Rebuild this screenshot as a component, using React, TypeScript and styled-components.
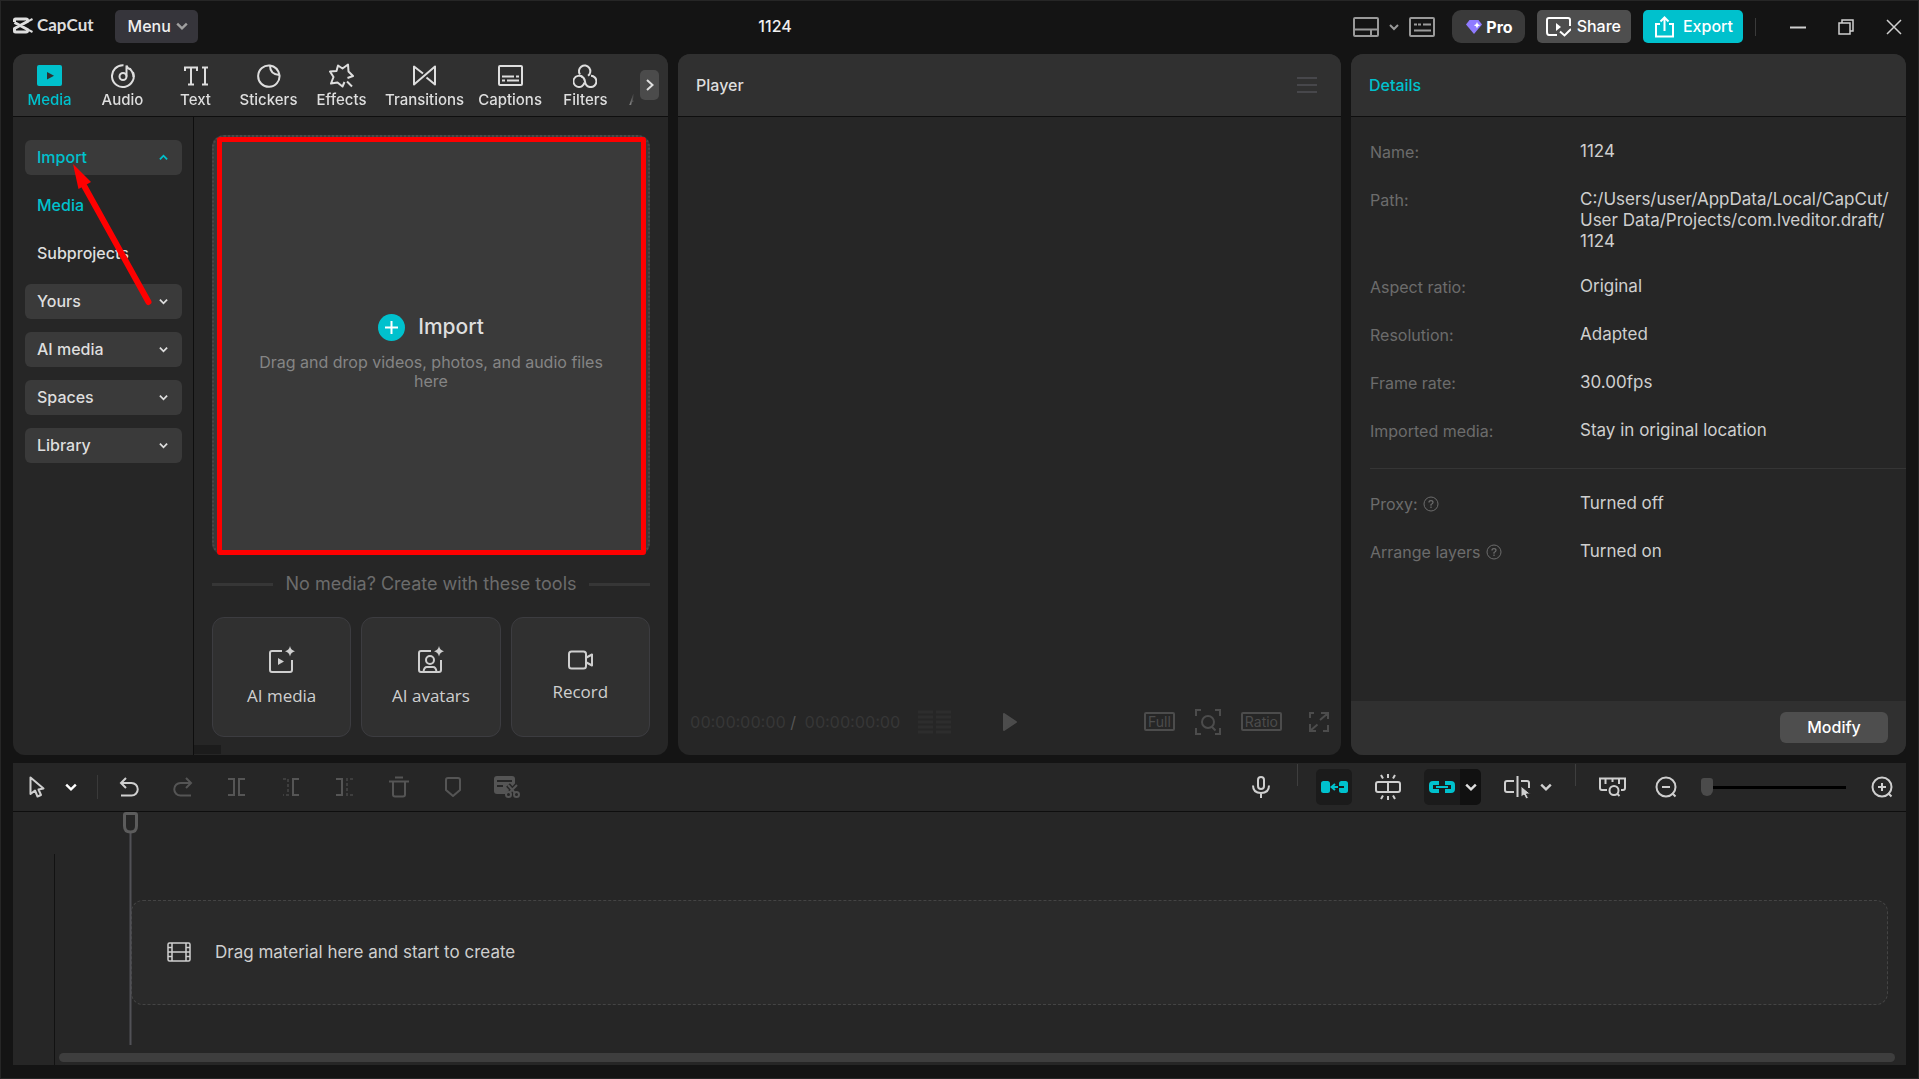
import React from "react";
import styled, { createGlobalStyle } from "styled-components";

const accent = "#00c1cd";
const line = "#0e0e0e";

const GlobalStyle = createGlobalStyle`
  * { box-sizing: border-box; }
  body { margin: 0; background: #141414; }
  body, button, input { font-family: Inter, "Liberation Sans", sans-serif; }
  button { margin: 0; padding: 0; border: 0; background: none; color: inherit; font-size: 16px; cursor: pointer; }
  svg { display: block; flex: none; }
`;

/* ---------- icons ---------- */

type IconProps = { w: number; h: number; color?: string; sw?: number; children: React.ReactNode };

const Icon = ({ w, h, color = "currentColor", sw = 2, children }: IconProps) => (
  <svg width={w} height={h} viewBox={`0 0 ${w} ${h}`} fill="none" stroke={color} strokeWidth={sw} aria-hidden="true">
    {children}
  </svg>
);

const Chevron = ({ up = false, size = 10 }: { up?: boolean; size?: number }) => (
  <svg width={size} height={size} viewBox="0 0 10 10" fill="none" stroke="currentColor" strokeWidth="2" aria-hidden="true">
    <path d={up ? "M1 7l4-4 4 4" : "M1 3l4 4 4-4"} />
  </svg>
);

const Logo = () => (
  <Icon w={20} h={17} color="#dedede" sw={3}>
    <path d="M1.500 5V3Q1.500 2 2.500 2H13Q14.500 2 14.500 3.200V4.500L1.500 11.500V14Q1.500 15 2.500 15H13Q14.500 15 14.500 13.800V12.500L1.500 5.500" strokeLinejoin="round" />
    <path d="M13.500 5.200L19.500 2M13.500 11.800L19.500 15" strokeWidth="2" />
  </Icon>
);

const MediaIcon = () => (
  <Icon w={25} h={21}>
    <rect x="0" y="0" width="25" height="21" rx="2" fill={accent} stroke="none" />
    <path d="M10 7v7.500l7-3.750z" fill="#303030" stroke="none" />
  </Icon>
);
const AudioIcon = () => (
  <Icon w={24} h={24}>
    <path d="M12.500 1.200A10.900 10.900 0 1 0 22 8" />
    <path d="M18.500 4.500Q22 7.500 22.500 13" />
    <circle cx="12" cy="12.500" r="3.500" />
    <path d="M15.500 12.500V1.500Q16 4.500 20 5.500" />
  </Icon>
);
const TextIcon = () => (
  <Icon w={24} h={20} sw={2}>
    <path d="M1 5V1.500h12V5M7 1.500v17M4 18.500h6M18 1.500h6M21 1.500v17M18 18.500h6" />
  </Icon>
);
const StickerIcon = () => (
  <Icon w={24} h={24}>
    <path d="M13 1.500A10.700 10.700 0 1 0 22.500 11" />
    <path d="M13 1.500Q13 10.500 22.500 11" />
    <path d="M13 1.500Q20.500 2.500 22.500 11" />
  </Icon>
);
const EffectsIcon = () => (
  <Icon w={25} h={25}>
    <path d="M15.500 19L13.500 23.500L8.500 19.500L2 20.500L4.500 14L1 8.500L7.500 8L9 2.500L13.500 5.500L19 1.500L19.500 8.500L24 13L18.500 15" strokeLinejoin="round" />
    <path d="M18 18.500l5 5" />
  </Icon>
);
const TransitionsIcon = () => (
  <Icon w={23} h={21}>
    <path d="M10 8.500L1 1.500V19.500L22 1.500V19.500L13.500 12.500" strokeLinejoin="round" />
  </Icon>
);
const CaptionsIcon = () => (
  <Icon w={25} h={21}>
    <rect x="1" y="1" width="23" height="19" rx="1" />
    <path d="M4 11.500h12M18 11.500h3M4 15.500h3M9 15.500h12" />
  </Icon>
);
const FiltersIcon = () => (
  <Icon w={24} h={24}>
    <path d="M7 10.500A5.700 5.700 0 1 1 15 11.800" />
    <path d="M9.500 13A5.600 5.600 0 1 0 11.500 18.500" />
    <path d="M18 11.700A5.700 5.700 0 1 1 12 17.500Q11.500 13.500 8 11.800" />
  </Icon>
);

const sparkle = "M22 0q.9 4.300 5 5.200-4.100.9-5 5.200-.9-4.300-5-5.200 4.100-.9 5-5.200z";
const AiMediaIcon = () => (
  <Icon w={27} h={28} color="#cfcfcf" sw={2}>
    <path d="M14 5H4Q2 5 2 7V24Q2 26 4 26H22Q24 26 24 24V14" />
    <path d="M10 12v7l6-3.500z" fill="#cfcfcf" stroke="none" />
    <path d={sparkle} fill="#cfcfcf" stroke="none" />
  </Icon>
);
const AiAvatarIcon = () => (
  <Icon w={27} h={28} color="#cfcfcf" sw={2}>
    <path d="M14 5H4Q2 5 2 7V24Q2 26 4 26H22Q24 26 24 24V14" />
    <circle cx="13" cy="14" r="4" />
    <path d="M6.500 26Q7 21 10 21h6q3 0 3.500 5" />
    <path d={sparkle} fill="#cfcfcf" stroke="none" />
  </Icon>
);
const RecordIcon = () => (
  <Icon w={25} h={20} color="#cfcfcf">
    <rect x="1" y="1.500" width="17" height="17" rx="2.500" />
    <path d="M18.500 7.500L24 4.500V15.500L18.500 12.500" strokeLinejoin="round" />
  </Icon>
);
const HelpIcon = () => (
  <svg width="16" height="16" viewBox="0 0 16 16" fill="none" stroke="#6c6c6c" aria-hidden="true">
    <circle cx="8" cy="8" r="7" />
    <path d="M6 6.500Q6 4.700 8 4.700T10 6.400Q10 7.300 8 8.500V9.700M8 10.600v1.300" strokeWidth="1.200" />
  </svg>
);

/* ---------- window frame and title bar ---------- */

const Window = styled.div`
  min-height: 100vh;
  display: flex;
  flex-direction: column;
  padding: 0 12px 13px;
  border: 1px solid #262626;
  background: #141414;
  color: #dedede;
  font-size: 16px;
`;

const TitleBar = styled.header`
  height: 53px;
  display: flex;
  align-items: center;
  justify-content: space-between;
  padding-bottom: 2px;
`;

const Group = styled.div<{ gap?: number }>`
  display: flex;
  align-items: center;
  gap: ${(p) => p.gap ?? 0}px;
`;

const WindowControls = styled(Group)`
  padding-left: 18px;
`;

const Brand = styled.div`
  display: flex;
  align-items: center;
  gap: 4px;
  margin-right: 21px;
  padding-bottom: 3px;
  font: 700 17px/20px Lato, sans-serif;
`;

const MenuButton = styled.button`
  display: flex;
  align-items: center;
  gap: 5px;
  height: 33px;
  padding: 0 10px 2px 13px;
  border-radius: 5px;
  background: #36353b;
  color: #efefef;
  font-weight: 500;
  svg { color: #a0a0a0; }
`;

const ProjectTitle = styled.h1`
  margin: 0;
  padding-bottom: 2px;
  font-size: 16px;
  font-weight: 500;
  color: #efefef;
`;

const BarButton = styled.button<{ bg: string }>`
  display: flex;
  align-items: center;
  gap: 6px;
  height: 33px;
  margin-left: 12px;
  padding: 0 10px 0 9px;
  border-radius: 5px;
  background: ${(p) => p.bg};
  color: #fff;
  font-weight: 500;
  span { padding-bottom: 2px; }
`;

const ProButton = styled(BarButton)`
  gap: 4px;
  margin-left: 16px;
  padding: 0 12px 0 14px;
  border-radius: 9px;
  font-weight: 700;
`;

const ExportButton = styled(BarButton)`
  gap: 9px;
  padding: 0 10px 0 12px;
`;

const IconButton = styled.button<{ w?: number; tone?: string }>`
  display: flex;
  align-items: center;
  justify-content: center;
  width: ${(p) => (p.w ? `${p.w}px` : "auto")};
  height: 36px;
  color: ${(p) => p.tone ?? "#cfcfcf"};
`;

const VLine = styled.span<{ h: number; before?: number; after?: number }>`
  width: 1px;
  height: ${(p) => p.h}px;
  margin: 0 ${(p) => p.after ?? 12}px 0 ${(p) => p.before ?? 12}px;
  background: #3a3a3a;
`;

/* ---------- panels ---------- */

const Panels = styled.main`
  flex: 1;
  display: grid;
  grid-template-columns: minmax(0, 655fr) minmax(0, 663fr) minmax(0, 555fr);
  gap: 10px;
  margin-bottom: 8px;
`;

const Panel = styled.section`
  position: relative;
  display: flex;
  flex-direction: column;
  border-radius: 12px;
  background: #262626;
  overflow: hidden;
`;

const PanelHeader = styled.div<{ tone?: string }>`
  display: flex;
  align-items: center;
  justify-content: space-between;
  height: 63px;
  padding: 0 24px 0 18px;
  border-bottom: 1px solid ${line};
  background: #303030;
  color: ${(p) => p.tone ?? "#dedede"};
  font-weight: 500;
`;

const TabHeader = styled(PanelHeader)`
  padding: 0 9px 0 0;
`;

const TabList = styled.nav`
  flex: 1;
  display: flex;
  min-width: 0;
  margin-right: 6px;
  overflow: hidden;
  mask-image: linear-gradient(to right, #000 calc(100% - 8px), transparent);
`;

const Tab = styled.button<{ active?: boolean }>`
  flex: none;
  display: flex;
  flex-direction: column;
  align-items: center;
  gap: 1px;
  min-width: 73px;
  padding: 2px 7px 0;
  color: ${(p) => (p.active ? accent : "#dedede")};
  font-size: 15px;
  font-weight: 500;
  line-height: 20px;
`;

const TabIcon = styled.span`
  display: flex;
  align-items: center;
  height: 26px;
`;

const MoreTabs = styled.button`
  display: flex;
  align-items: center;
  justify-content: center;
  width: 19px;
  height: 30px;
  border-radius: 5px;
  background: #4b4b4b;
`;

const MediaBody = styled.div`
  flex: 1;
  display: flex;
`;

const Sidebar = styled.aside`
  display: flex;
  flex-direction: column;
  gap: 13px;
  width: 181px;
  padding: 23px 11px 0 12px;
  border-right: 1px solid ${line};
`;

const SideItem = styled.button<{ boxed?: boolean; active?: boolean }>`
  display: flex;
  align-items: center;
  justify-content: space-between;
  height: 35px;
  padding: 0 14px 1px 12px;
  border-radius: 6px;
  background: ${(p) => (p.boxed ? "#3a3a3a" : "transparent")};
  color: ${(p) => (p.active ? accent : "#dedede")};
  font-weight: 500;
`;

const MediaContent = styled.div`
  position: relative;
  flex: 1;
  display: flex;
  flex-direction: column;
  padding: 18px;
`;

const DropZone = styled.button`
  position: relative;
  flex: 1;
  display: flex;
  flex-direction: column;
  align-items: center;
  justify-content: center;
  gap: 12px;
  padding: 14px 36px 0;
  border: 2px dotted #4a4a4a;
  border-radius: 12px;
  background: #3a3a3a;
  line-height: 19px;
  color: #858585;
`;

const Highlight = styled.span`
  position: absolute;
  inset: 0 2px -2px 3px;
  border: 5px solid #fe0000;
  border-radius: 3px;
`;

const ImportTitle = styled.span`
  display: flex;
  align-items: center;
  gap: 13px;
  font-size: 21px;
  line-height: 28px;
  font-weight: 500;
  color: #dedede;
`;

const OrLine = styled.div`
  display: flex;
  align-items: center;
  gap: 12px;
  margin: 18px 0 22px;
  font-size: 18px;
  line-height: 22px;
  color: #6c6c6c;
  &::before, &::after { content: ""; flex: 1; height: 3px; background: #363636; }
`;

const Tools = styled.div`
  display: grid;
  grid-template-columns: repeat(3, 1fr);
  gap: 10px;
`;

const Tool = styled.button`
  display: flex;
  flex-direction: column;
  align-items: center;
  justify-content: center;
  gap: 10px;
  height: 120px;
  border: 1px solid #3c3c40;
  border-radius: 12px;
  background: #303030;
  color: #cfcfcf;
  font: 400 17px/24px "Open Sans", sans-serif;
`;

const ScrollStub = styled.span`
  position: absolute;
  left: 0;
  bottom: 1px;
  width: 27px;
  height: 9px;
  background: #1c1c1c;
`;

const ArrowLayer = styled.svg`
  position: absolute;
  left: 54px;
  top: 108px;
  pointer-events: none;
`;

/* ---------- player ---------- */

const PlayerStage = styled.div`
  flex: 1;
`;

const PlayerBar = styled.div`
  display: grid;
  grid-template-columns: 1fr auto 1fr;
  align-items: center;
  height: 67px;
  padding: 0 12px;
  color: #4c4c4c;
`;

const PlayerTools = styled(Group)`
  justify-content: flex-end;
`;

const Timecode = styled.span`
  color: #373737;
  font-variant-numeric: tabular-nums;
  white-space: pre;
  b { font-weight: 400; color: #555; }
`;

const Boxed = styled.button`
  height: 19px;
  padding: 0 2px;
  border: 2px solid #4c4c4c;
  border-radius: 2px;
  font-size: 14px;
  line-height: 14px;
  color: #4c4c4c;
`;

/* ---------- details ---------- */

const DetailList = styled.dl`
  flex: 1;
  display: flex;
  flex-direction: column;
  gap: 24px;
  margin: 0;
  padding: 24px 0 0 19px;
`;

const DetailRow = styled.div`
  display: grid;
  grid-template-columns: 210px minmax(0, 1fr);
  min-height: 24px;
  padding-right: 12px;
  dt { display: flex; align-items: center; gap: 5px; height: 22px; color: #6c6c6c; }
  dd { margin: 0; font-size: 17px; line-height: 21px; color: #cfcfcf; white-space: pre-line; }
`;

const Rule = styled.div`
  height: 1px;
  background: #353535;
`;

const DetailFooter = styled.div`
  display: flex;
  align-items: center;
  justify-content: flex-end;
  height: 54px;
  padding: 0 18px 1px;
  background: #303030;
`;

const ModifyButton = styled.button`
  width: 108px;
  height: 31px;
  padding-bottom: 2px;
  border-radius: 6px;
  background: #4e4e4e;
  color: #fff;
  font-weight: 500;
`;

/* ---------- timeline ---------- */

const Timeline = styled.section`
  display: flex;
  flex-direction: column;
  height: 302px;
  background: #262626;
`;

const Toolbar = styled.div`
  display: flex;
  align-items: center;
  justify-content: space-between;
  height: 49px;
  padding: 0 6px 0 7px;
  border-bottom: 1px solid ${line};
`;

const ToolGroup = styled(Group)`
  height: 48px;
`;

const ModeGroup = styled(ToolGroup)`
  padding-right: 9px;
`;

const Toggle = styled.button<{ w: number; dark?: boolean }>`
  display: flex;
  align-items: center;
  justify-content: center;
  width: ${(p) => p.w}px;
  height: 36px;
  background: ${(p) => (p.dark ? "#111" : "#1b1b1b")};
  color: ${(p) => (p.dark ? "#dedede" : accent)};
`;

const ToggleGroup = styled.div`
  display: flex;
  border-radius: 5px;
  overflow: hidden;
`;

const ToolDivider = styled.span`
  align-self: flex-start;
  width: 1px;
  height: 22px;
  margin-top: 1px;
  background: #3e3e3e;
`;

const ZoomSlider = styled.input`
  appearance: none;
  width: 145px;
  height: 18px;
  margin: 0 18px 0 8px;
  background: linear-gradient(#000, #000) center / 100% 3px no-repeat;
  &::-webkit-slider-thumb {
    appearance: none;
    width: 12px;
    height: 18px;
    border-radius: 3px 3px 6px 6px;
    background: #4b4b4b;
  }
`;

const Tracks = styled.div`
  position: relative;
  flex: 1;
  display: flex;
  flex-direction: column;
`;

const TrackRow = styled.div`
  flex: 1;
  display: flex;
`;

const TrackHead = styled.div`
  width: 42px;
  margin-top: 42px;
  border-right: 1px solid #121212;
`;

const TrackDrop = styled.div`
  flex: 1;
  display: flex;
  align-items: center;
  gap: 24px;
  height: 105px;
  margin: 88px 18px 0 76px;
  padding: 0 35px 2px;
  border: 1px dashed #444;
  border-radius: 12px;
  background: #2a2a2a;
  font-size: 17px;
  color: #cfcfcf;
`;

const ScrollTrack = styled.div`
  position: absolute;
  left: 46px;
  right: 11px;
  bottom: 3px;
  height: 9px;
  border-radius: 5px;
  background: #3e3e3e;
`;

const Playhead = styled.svg`
  position: absolute;
  left: 110px;
  top: 0;
`;

const tabs: [string, React.ReactNode][] = [
  ["Media", <MediaIcon />],
  ["Audio", <AudioIcon />],
  ["Text", <TextIcon />],
  ["Stickers", <StickerIcon />],
  ["Effects", <EffectsIcon />],
  ["Transitions", <TransitionsIcon />],
  ["Captions", <CaptionsIcon />],
  ["Filters", <FiltersIcon />],
  ["Adjustment", null],
];

const details = [
  ["Name:", "1124"],
  ["Path:", "C:/Users/user/AppData/Local/CapCut/\nUser Data/Projects/com.lveditor.draft/\n1124"],
  ["Aspect ratio:", "Original"],
  ["Resolution:", "Adapted"],
  ["Frame rate:", "30.00fps"],
  ["Imported media:", "Stay in original location"],
];

const editTools: [string, string, React.ReactNode][] = [
  ["Undo", "#cfcfcf", <Icon w={20} h={20}><path d="M7 1L2 6l5 5M2 6h10.500a6 6 0 0 1 0 12.500H2" /></Icon>],
  ["Redo", "#555", <Icon w={20} h={20}><path d="M13 1l5 5-5 5M18 6H7.500a6 6 0 0 0 0 12.500H18" /></Icon>],
  ["Split", "#555", <Icon w={20} h={20}><path d="M1 2h6v16H1M18 2h-6v16h6" /></Icon>],
  ["Delete left", "#555", <Icon w={20} h={20}><path d="M2 2h5v16H2" strokeDasharray="3 2" opacity=".5" /><path d="M18 2h-6v16h6" /></Icon>],
  ["Delete right", "#555", <Icon w={20} h={20}><path d="M1 2h6v16H1" /><path d="M18 2h-6v16h6" strokeDasharray="3 2" opacity=".5" /></Icon>],
  ["Delete", "#555", <Icon w={20} h={22}><path d="M6 1.500h8M0 5.500h20M4 5.500V18.500Q4 20.500 6 20.500h8q2 0 2-2V5.500" /></Icon>],
  ["Marker", "#555", <Icon w={16} h={20}><path d="M3 1h10q2 0 2 2v10l-7 6-7-6V3q0-2 2-2z" /></Icon>],
  ["Clip list", "#555", (
    <Icon w={26} h={22}>
      <path d="M3 0h15q3 0 3 3v6l-8 9H3q-3 0-3-3V3q0-3 3-3z" fill="#555" stroke="none" />
      <path d="M3 5h15M3 10h6" stroke="#262626" />
      <path d="M14 9l8 9M23 9l-8 9" stroke="#262626" strokeWidth="5" />
      <path d="M14 9l7 8M23 9l-8 8" />
      <circle cx="14.500" cy="18.500" r="2.500" fill="#262626" /><circle cx="22.500" cy="18.500" r="2.500" fill="#262626" />
    </Icon>
  )],
];

export default function App() {
  return (
    <>
      <GlobalStyle />
      <Window>
        <TitleBar>
          <Group>
            <Brand><Logo />CapCut</Brand>
            <MenuButton>Menu<Chevron size={12} /></MenuButton>
          </Group>
          <ProjectTitle>1124</ProjectTitle>
          <Group>
            <IconButton w={28} tone="#999" aria-label="Layout">
              <Icon w={26} h={20}><rect x="1" y="1" width="24" height="18" rx="1" /><path d="M1 12.500h24M18 12.500V19" /></Icon>
            </IconButton>
            <IconButton w={28} tone="#999" aria-label="Layout options"><Chevron size={10} /></IconButton>
            <IconButton w={28} tone="#999" aria-label="Shortcuts">
              <Icon w={26} h={20}><rect x="1" y="1" width="24" height="18" rx="1" /><path d="M5 7.500h3M9 7.500h3M14 7.500h8M5 13.500h17" /></Icon>
            </IconButton>
            <ProButton bg="#3a3a3a">
              <svg width="16" height="14" viewBox="0 0 16 14" aria-hidden="true">
                <path d="M3.500 0h9L16 4.500 8 14 0 4.500z" fill="#8f7bff" />
                <path d="M11 2l1 2.200 2.200 1-2.200 1-1 2.200-1-2.200-2.200-1 2.200-1z" fill="#fff" />
              </svg>
              Pro
            </ProButton>
            <BarButton bg="#4e4e4e">
              <Icon w={25} h={20}>
                <path d="M24 9V3Q24 1 22 1H3Q1 1 1 3V15Q1 18 3 18H11M14 14.500l4.500 4L25 12" />
                <path d="M10 6v8l5-4z" fill="#fff" stroke="none" />
              </Icon>
              <span>Share</span>
            </BarButton>
            <ExportButton bg={accent}>
              <Icon w={19} h={22}><path d="M5 8H1V20.500H18V8H14M9.500 15V2M5.500 5.500L9.500 1.500L13.500 5.500" /></Icon>
              <span>Export</span>
            </ExportButton>
            <VLine h={18} />
            <WindowControls gap={24}>
              <IconButton w={24} aria-label="Minimize"><Icon w={16} h={16}><path d="M0 8.500h16" /></Icon></IconButton>
              <IconButton w={24} aria-label="Restore">
                <Icon w={16} h={18} sw={1.5}><rect x="1" y="5" width="11" height="11" /><path d="M4 5V2h11v11h-3" /></Icon>
              </IconButton>
              <IconButton w={24} aria-label="Close"><Icon w={16} h={16} sw={1.5}><path d="M1 1l14 14M15 1L1 15" /></Icon></IconButton>
            </WindowControls>
          </Group>
        </TitleBar>

        <Panels>
          <Panel>
            <TabHeader>
              <TabList>
                {tabs.map(([label, icon], i) => (
                  <Tab key={label} active={i === 0}><TabIcon>{icon}</TabIcon>{label}</Tab>
                ))}
              </TabList>
              <MoreTabs aria-label="More tabs"><Icon w={8} h={12}><path d="M1 1l5.500 5L1 11" /></Icon></MoreTabs>
            </TabHeader>
            <MediaBody>
              <Sidebar>
                <SideItem boxed active>Import<Chevron up size={9} /></SideItem>
                <SideItem active>Media</SideItem>
                <SideItem>Subprojects</SideItem>
                {["Yours", "AI media", "Spaces", "Library"].map((name) => (
                  <SideItem boxed key={name}>{name}<Chevron size={9} /></SideItem>
                ))}
              </Sidebar>
              <MediaContent>
                <DropZone>
                  <ImportTitle>
                    <svg width="27" height="27" viewBox="0 0 27 27" aria-hidden="true">
                      <circle cx="13.500" cy="13.500" r="13.500" fill={accent} />
                      <path d="M13.500 7v13M7 13.500h13" stroke="#fff" strokeWidth="2" />
                    </svg>
                    Import
                  </ImportTitle>
                  <span>Drag and drop videos, photos, and audio files here</span>
                  <Highlight />
                </DropZone>
                <OrLine>No media? Create with these tools</OrLine>
                <Tools>
                  <Tool><AiMediaIcon />AI media</Tool>
                  <Tool><AiAvatarIcon />AI avatars</Tool>
                  <Tool><RecordIcon />Record</Tool>
                </Tools>
                <ScrollStub />
              </MediaContent>
            </MediaBody>
            <ArrowLayer width="90" height="146" viewBox="0 0 90 146" aria-hidden="true">
              <path d="M15 20L81.500 140" stroke="#fe0000" strokeWidth="6" strokeLinecap="round" />
              <path d="M6 2L24 20L11.500 27z" fill="#fe0000" />
            </ArrowLayer>
          </Panel>

          <Panel>
            <PanelHeader>
              Player
              <IconButton tone="#47474b" aria-label="Player menu"><Icon w={20} h={16}><path d="M0 1h20M0 8h20M0 15h20" /></Icon></IconButton>
            </PanelHeader>
            <PlayerStage />
            <PlayerBar>
              <Group gap={18}>
                <Timecode>00:00:00:00 <b>/</b>  00:00:00:00</Timecode>
                <Icon w={33} h={24} color="#2d2d2d" sw={3}>
                  <path d="M0 2h15M18 2h15M0 7h15M18 7h15M0 12h15M18 12h15M0 17h15M18 17h15M0 22h15M18 22h15" />
                </Icon>
              </Group>
              <IconButton tone="#4c4c4c" aria-label="Play"><Icon w={14} h={18}><path d="M1 1v16l12-8z" fill="currentColor" strokeLinejoin="round" /></Icon></IconButton>
              <PlayerTools gap={20}>
                <Boxed>Full</Boxed>
                <IconButton tone="#4c4c4c" aria-label="Zoom to fit">
                  <Icon w={26} h={26}><path d="M1 7V1h5M20 1h5v6M1 19v6h5M20 25h5v-6M16.500 17.500l4 4" /><circle cx="13" cy="13" r="6" /></Icon>
                </IconButton>
                <Boxed>Ratio</Boxed>
                <IconButton tone="#4c4c4c" aria-label="Full screen">
                  <Icon w={27} h={20}><path d="M12 1H8v5M19 1h7v6M25 2l-7 6M26 13v6h-5M8 12v7h6M8.500 18.500l7-6" /></Icon>
                </IconButton>
              </PlayerTools>
            </PlayerBar>
          </Panel>

          <Panel>
            <PanelHeader tone={accent}>Details</PanelHeader>
            <DetailList>
              {details.map(([k, v]) => (
                <DetailRow key={k}><dt>{k}</dt><dd>{v}</dd></DetailRow>
              ))}
              <Rule />
              <DetailRow><dt>Proxy:<HelpIcon /></dt><dd>Turned off</dd></DetailRow>
              <DetailRow><dt>Arrange layers<HelpIcon /></dt><dd>Turned on</dd></DetailRow>
            </DetailList>
            <DetailFooter><ModifyButton>Modify</ModifyButton></DetailFooter>
          </Panel>
        </Panels>

        <Timeline>
          <Toolbar>
            <ToolGroup>
              <IconButton w={34} aria-label="Select tool">
                <Icon w={16} h={22}><path d="M1.500 1.500V18L6 14.500L8.500 20.500L12 19L9.500 13.500L14.500 12.500Z" strokeLinejoin="round" /></Icon>
              </IconButton>
              <IconButton w={34} tone="#fff" aria-label="Select options"><Chevron size={12} /></IconButton>
              <VLine h={24} before={9} after={4} />
              {editTools.map(([label, tone, icon]) => (
                <IconButton w={54} tone={tone} key={label} aria-label={label}>{icon}</IconButton>
              ))}
            </ToolGroup>
            <ToolGroup>
              <ModeGroup gap={18}>
                <IconButton w={36} aria-label="Record voiceover">
                  <Icon w={18} h={22}><rect x="6" y="1" width="6" height="12" rx="3" /><path d="M1 9.500q0 7.500 8 7.500t8-7.500M9 17v5" /></Icon>
                </IconButton>
                <ToolDivider />
                <ToggleGroup>
                  <Toggle w={36} aria-label="Main track magnet">
                    <Icon w={27} h={12}>
                      <rect x="0" y="0" width="9" height="12" rx="2.500" fill="currentColor" stroke="none" />
                      <rect x="18" y="0" width="9" height="12" rx="2.500" fill="currentColor" stroke="none" />
                      <path d="M18 6H11M14 3l-3.500 3L14 9" /><path d="M17 6h6" stroke="#1b1b1b" />
                    </Icon>
                  </Toggle>
                </ToggleGroup>
                <IconButton w={36} aria-label="Auto snapping">
                  <Icon w={26} h={26}><rect x="1" y="8" width="24" height="10" rx="2" /><path d="M13 8v10M13 0v4M6 1l2 3.500M20 1l-2 3.500M13 26v-4M6 25l2-3.500M20 25l-2-3.500" /></Icon>
                </IconButton>
                <ToggleGroup>
                  <Toggle w={36} aria-label="Linkage">
                    <Icon w={26} h={12} sw={4}><path d="M10 2H4Q2 2 2 4V8Q2 10 4 10H10M16 2h6q2 0 2 2v4q0 2-2 2h-6" /><path d="M7 6h12" strokeWidth="2" /></Icon>
                  </Toggle>
                  <Toggle w={21} dark aria-label="Linkage options"><Chevron size={12} /></Toggle>
                </ToggleGroup>
                <Group>
                  <IconButton w={36} aria-label="Preview axis">
                    <Icon w={27} h={24}>
                      <path d="M10 6H3Q1 6 1 8V15Q1 17 3 17H10M17 6h6q2 0 2 2v5M13.500 1v21" />
                      <path d="M17 11v11l3-2 2 4 2.500-1-2-4h4z" fill="currentColor" stroke="#262626" strokeWidth="1" />
                    </Icon>
                  </IconButton>
                  <IconButton w={22} aria-label="Preview axis options"><Chevron size={12} /></IconButton>
                </Group>
                <ToolDivider />
              </ModeGroup>
              <IconButton w={54} aria-label="Fit timeline">
                <Icon w={27} h={20}>
                  <path d="M8 13H3Q1 13 1 11V1.500H26V11q0 2-2 2h-2M6.500 1v6M13.500 1v4M20 1v6" /><circle cx="15" cy="13.500" r="4.500" /><path d="M18 16.500l2.500 2.500" />
                </Icon>
              </IconButton>
              <IconButton w={54} aria-label="Zoom out">
                <Icon w={22} h={22}><circle cx="11" cy="11" r="9.500" /><path d="M7 11h8M17 17l3.500 3.500" /></Icon>
              </IconButton>
              <ZoomSlider type="range" min="0" max="100" defaultValue="0" aria-label="Timeline zoom" />
              <IconButton w={36} aria-label="Zoom in">
                <Icon w={22} h={22}><circle cx="11" cy="11" r="9.500" /><path d="M7 11h8M11 7v8M17 17l3.500 3.500" /></Icon>
              </IconButton>
            </ToolGroup>
          </Toolbar>
          <Tracks>
            <TrackRow>
              <TrackHead />
              <TrackDrop>
                <Icon w={24} h={20} sw={1.5}>
                  <rect x="1" y="1" width="22" height="18" rx="1.500" />
                  <path d="M5 1v18M19 1v18M5 10h14M1 5.500h4M1 10h4M1 14.500h4M19 5.500h4M19 10h4M19 14.500h4" />
                </Icon>
                Drag material here and start to create
              </TrackDrop>
            </TrackRow>
            <ScrollTrack />
            <Playhead width="15" height="233" viewBox="0 0 15 233" fill="none" aria-hidden="true">
              <path d="M7.500 21V233" stroke="#515156" strokeWidth="2" />
              <path d="M3 1.500h9q1.500 0 1.500 1.500V14q0 6-6 6t-6-6V3q0-1.500 1.500-1.500z" stroke="#5c5c5c" strokeWidth="3" />
            </Playhead>
          </Tracks>
        </Timeline>
      </Window>
    </>
  );
}
